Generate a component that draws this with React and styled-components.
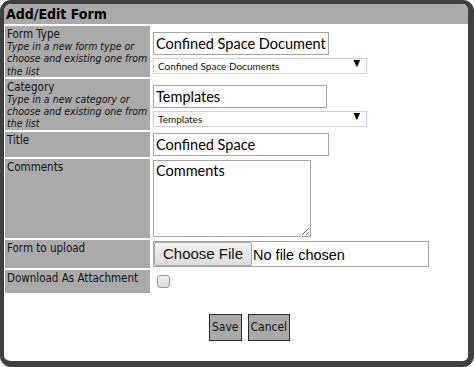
import React from "react";
import styled, { createGlobalStyle } from "styled-components";

const GlobalStyle = createGlobalStyle`
  html, body {
    margin: 0;
    padding: 0;
    background: #fff;
  }
  * {
    box-sizing: border-box;
  }
`;

const Dialog = styled.div`
  width: 474px;
  height: 367px;
  border-style: solid;
  border-color: #404040;
  border-width: 4px 6px 6px 4px;
  border-radius: 11px;
  background: #fff;
  overflow: hidden;
  display: flex;
  flex-direction: column;
  font-family: "DejaVu Sans Condensed", "DejaVu Sans", sans-serif;
  color: #111;
`;

const Header = styled.div`
  height: 20px;
  flex: none;
  background: #aaa;
  padding: 1px 2px 0;
  font-weight: bold;
  font-size: 14px;
  line-height: 18px;
  color: #000;
`;

const FormGrid = styled.div`
  display: grid;
  grid-template-columns: 145px 1fr;
  column-gap: 2px;
  row-gap: 2px;
  padding: 2px 0 0 1px;
`;

const LabelCell = styled.div`
  background: #aaa;
  padding: 2px 2px 0;
  font-size: 11.5px;
  line-height: 12px;
  min-height: ${({ $min }) => $min || 0}px;
`;

const Hint = styled.div`
  font-style: italic;
  font-size: 10.5px;
  line-height: 12.3px;
`;

const ValueCell = styled.div`
  display: flex;
  flex-direction: column;
  justify-content: center;
  align-items: flex-start;
  padding: 1px;
`;

const TextInput = styled.input`
  width: ${({ $w }) => $w || 176}px;
  height: 23px;
  border: 1px solid #a5a5a5;
  padding: 0 2px;
  margin: 0;
  font-family: Lato, "Open Sans", sans-serif;
  font-size: 14.5px;
  color: #000;
  background: #fff;
  outline: none;
`;

const SelectWrap = styled.div`
  position: relative;
  width: 214px;
  height: 16px;

  &::after {
    content: "▼";
    position: absolute;
    right: 7px;
    top: 2px;
    font-size: 9.5px;
    line-height: 12px;
    color: #000;
    pointer-events: none;
  }
`;

const Select = styled.select`
  appearance: none;
  width: 100%;
  height: 16px;
  border: 1px solid #d0d0d0;
  background: #fff;
  padding: 0 4px;
  margin: 0;
  font-family: Lato, "Open Sans", sans-serif;
  font-size: 10px;
  line-height: 14px;
  color: #111;
  outline: none;
`;

const TextArea = styled.textarea`
  width: 158px;
  height: 77px;
  border: 1px solid #a5a5a5;
  padding: 1px 2px;
  margin: 0;
  font-family: Lato, "Open Sans", sans-serif;
  font-size: 14.5px;
  color: #000;
  resize: both;
  outline: none;
`;

const FileInput = styled.input`
  width: 276px;
  height: 26px;
  border: 1px solid #a5a5a5;
  margin: 0;
  padding: 0;
  font-family: "Liberation Sans", Arial, sans-serif;
  font-size: 14.5px;
  color: #000;
  background: #fff;

  &::file-selector-button {
    height: 24px;
    margin: 0 1px 0 0;
    padding: 0 8px;
    border: 1px solid #a8a8a8;
    border-radius: 2px;
    background: linear-gradient(#f4f4f4, #dcdcdc);
    font-family: "Liberation Sans", Arial, sans-serif;
    font-size: 15px;
    color: #111;
  }
`;

const CheckBox = styled.input`
  appearance: none;
  width: 13px;
  height: 13px;
  margin: 3px 0 3px 4px;
  border: 1px solid #9a9a9a;
  border-radius: 3px;
  background: linear-gradient(#f2f2f2, #dadada);
`;

const Footer = styled.div`
  display: flex;
  gap: 6px;
  padding: 21px 0 0 205px;
`;

const ActionButton = styled.button`
  height: 27px;
  padding: 0 2px;
  border: 1px solid #2a2a2a;
  background: #aaa;
  font-family: "DejaVu Sans Condensed", "DejaVu Sans", sans-serif;
  font-size: 12px;
  color: #111;
`;

export default function App() {
  return (
    <>
      <GlobalStyle />
      <Dialog>
        <Header>Add/Edit Form</Header>
        <FormGrid>
          <LabelCell>
            Form Type
            <Hint>Type in a new form type or choose and existing one from the list</Hint>
          </LabelCell>
          <ValueCell>
            <TextInput defaultValue="Confined Space Document" />
            <SelectWrap>
              <Select defaultValue="Confined Space Documents">
                <option>Confined Space Documents</option>
              </Select>
            </SelectWrap>
          </ValueCell>

          <LabelCell>
            Category
            <Hint>Type in a new category or choose and existing one from the list</Hint>
          </LabelCell>
          <ValueCell>
            <TextInput $w={174} defaultValue="Templates" />
            <SelectWrap>
              <Select defaultValue="Templates">
                <option>Templates</option>
              </Select>
            </SelectWrap>
          </ValueCell>

          <LabelCell>Title</LabelCell>
          <ValueCell>
            <TextInput defaultValue="Confined Space" />
          </ValueCell>

          <LabelCell>Comments</LabelCell>
          <ValueCell>
            <TextArea defaultValue="Comments" />
          </ValueCell>

          <LabelCell>Form to upload</LabelCell>
          <ValueCell>
            <FileInput type="file" />
          </ValueCell>

          <LabelCell $min={23}>Download As Attachment</LabelCell>
          <ValueCell>
            <CheckBox type="checkbox" />
          </ValueCell>
        </FormGrid>
        <Footer>
          <ActionButton>Save</ActionButton>
          <ActionButton>Cancel</ActionButton>
        </Footer>
      </Dialog>
    </>
  );
}
